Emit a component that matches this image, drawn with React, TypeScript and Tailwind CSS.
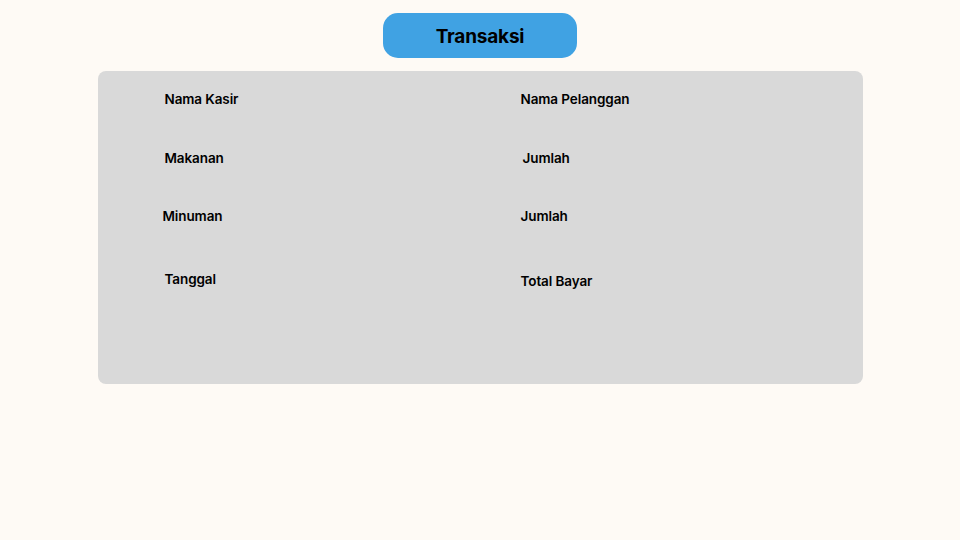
import React from "react";

export default function App() {
  return (
    <div
      className="w-[960px] h-[540px] bg-[#fefaf5] flex flex-col items-center pt-[13px] text-black"
      style={{ fontFamily: "Inter, 'Noto Sans', sans-serif" }}
    >
      <div className="w-[194px] h-[45px] rounded-[15px] bg-[#40a2e3] flex items-center justify-center pt-[3px] text-[19px] font-bold tracking-[-0.2px]">
        Transaksi
      </div>
      <div className="mt-[13px] w-[765px] h-[313px] rounded-[8px] bg-[#d9d9d9] flex pt-[18px] text-[13.5px] font-semibold leading-[20px] tracking-[-0.1px]">
        <div className="w-[423px] pl-[67px] flex flex-col">
          <div className="h-5">Nama Kasir</div>
          <div className="h-5 mt-[39px]">Makanan</div>
          <div className="h-5 mt-[38px] -ml-[2px]">Minuman</div>
          <div className="h-5 mt-[43px]">Tanggal</div>
        </div>
        <div className="flex flex-col">
          <div className="h-5">Nama Pelanggan</div>
          <div className="h-5 mt-[39px] ml-[2px]">Jumlah</div>
          <div className="h-5 mt-[38px]">Jumlah</div>
          <div className="h-5 mt-[45px]">Total Bayar</div>
        </div>
      </div>
    </div>
  );
}
